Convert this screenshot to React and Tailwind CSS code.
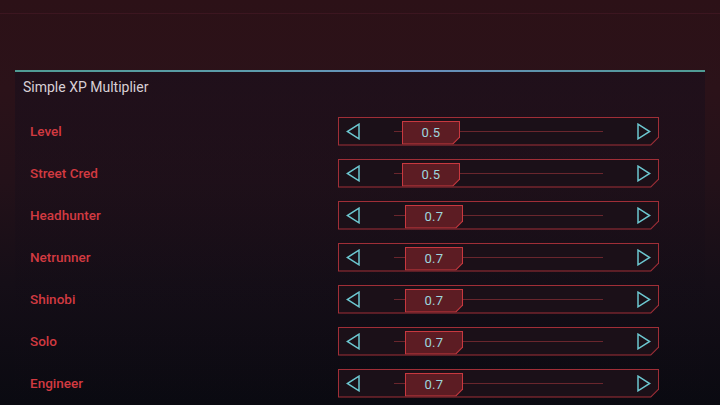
const rows = [
  { label: "Level", value: "0.5", left: 8 },
  { label: "Street Cred", value: "0.5", left: 8 },
  { label: "Headhunter", value: "0.7", left: 11 },
  { label: "Netrunner", value: "0.7", left: 11 },
  { label: "Shinobi", value: "0.7", left: 11 },
  { label: "Solo", value: "0.7", left: 11 },
  { label: "Engineer", value: "0.7", left: 11 },
]

function ArrowLeft() {
  return (
    <svg width="14" height="17" viewBox="0 0 14 17" className="shrink-0">
      <polygon points="13,1.2 1.3,8.5 13,15.8" fill="none" stroke="#6cc6cf" strokeWidth="1.5" strokeLinejoin="miter" />
    </svg>
  )
}

function ArrowRight() {
  return (
    <svg width="14" height="17" viewBox="0 0 14 17" className="shrink-0">
      <polygon points="1,1.2 12.7,8.5 1,15.8" fill="none" stroke="#6cc6cf" strokeWidth="1.5" strokeLinejoin="miter" />
    </svg>
  )
}

function Slider({ value, left }) {
  return (
    <div className="w-[321px] h-[29px] p-px bg-[#a02e37] [clip-path:polygon(0_0,100%_0,100%_calc(100%_-_8px),calc(100%_-_8px)_100%,0_100%)]">
      <div className="w-full h-full flex items-center px-[7px] bg-[#1b1018] [clip-path:polygon(0_0,100%_0,100%_calc(100%_-_7.5px),calc(100%_-_7.5px)_100%,0_100%)]">
        <ArrowLeft />
        {/* track + thumb */}
        <div className="relative flex-1 h-full mx-[34px] flex items-center">
          <div className="w-full h-px bg-[#6a262d]" />
          <div
            className="absolute top-[3px] bottom-0 w-[58px] p-px bg-[#c8383f] [clip-path:polygon(0_0,100%_0,100%_calc(100%_-_7px),calc(100%_-_7px)_100%,0_100%)]"
            style={{ left: left }}
          >
            <div className="w-full h-full flex items-center justify-center bg-[#5c1c23] [clip-path:polygon(0_0,100%_0,100%_calc(100%_-_6.5px),calc(100%_-_6.5px)_100%,0_100%)]">
              <span className="text-[13px] text-[#9ed6de] tracking-[0.3px]">{value}</span>
            </div>
          </div>
        </div>
        <ArrowRight />
      </div>
    </div>
  )
}

export default function App() {
  return (
    <div
      className="w-[720px] h-[405px] overflow-hidden bg-[linear-gradient(to_bottom,#2c1117_0%,#2b1219_22%,#231119_45%,#150e17_70%,#0a0a11_100%)]"
      style={{ fontFamily: "Roboto, 'Liberation Sans', sans-serif" }}
    >
      {/* faint top rule */}
      <div className="mt-[13px] h-px bg-[#3c1620]" />

      <div className="mx-[15px] mt-[56px] h-[2px] bg-[linear-gradient(to_right,#4f9c94,#5f9cb0_40%,#6a8cc0_55%,#4f9c94)]" />

      <div className="mx-[15px] h-[333px] bg-[linear-gradient(to_bottom,rgba(22,14,28,0.55),rgba(18,12,22,0.2)_60%,rgba(10,10,17,0))]">
        <div className="h-[30px] flex items-center pl-[8px]">
          <span className="text-[14px] text-[#d8cfd5]">Simple XP Multiplier</span>
        </div>

        <div className="mt-[8px] flex flex-col">
          {rows.map((row) => (
            <div key={row.label} className="h-[42px] flex items-center pl-[15px] pr-[46px]">
              <span className="flex-1 text-[13.5px] font-medium text-[#d23a41]">{row.label}</span>
              <Slider value={row.value} left={row.left} />
            </div>
          ))}
        </div>
      </div>
    </div>
  )
}
